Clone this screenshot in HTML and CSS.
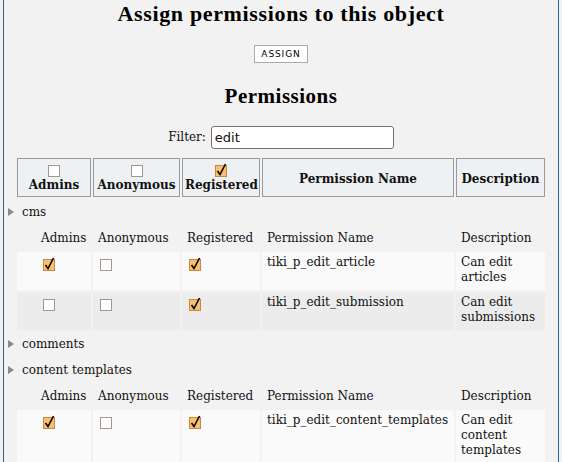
FILE: index.html
```html
<!DOCTYPE html>
<html>
<head>
<meta charset="utf-8">
<link rel="stylesheet" href="styles.css">
</head>
<body>
<div class="page">
  <h1 class="title">Assign permissions to this object</h1>
  <div class="assign-wrap"><button class="btn" type="button">ASSIGN</button></div>
  <h2 class="subtitle">Permissions</h2>
  <div class="filter"><label class="filter-label" for="flt">Filter:</label><input id="flt" class="filter-input" type="text" value="edit"></div>

  <table class="perm head">
    <colgroup><col class="c1"><col class="c2"><col class="c3"><col class="c4"><col class="c5"></colgroup>
    <tr>
      <th><svg class="cb" viewBox="0 0 12 12"><rect x="0.5" y="0.5" width="11" height="11" fill="#fff" stroke="#a3978b"/></svg>Admins</th>
      <th><svg class="cb" viewBox="0 0 12 12"><rect x="0.5" y="0.5" width="11" height="11" fill="#fff" stroke="#a3978b"/></svg>Anonymous</th>
      <th><svg class="cb" viewBox="0 0 12 12"><rect x="0.5" y="0.5" width="11" height="11" fill="#f8c06a" stroke="#c8884a"/><path d="M2.5 6 L5 9.5 L10.5 -1" fill="none" stroke="#000" stroke-width="1.6"/></svg>Registered</th>
      <th>Permission Name</th>
      <th>Description</th>
    </tr>
  </table>

  <div class="node"><span class="tri"></span>cms</div>
  <table class="perm list">
    <colgroup><col class="c1"><col class="c2"><col class="c3"><col class="c4"><col class="c5"></colgroup>
    <tr class="colhead"><td>Admins</td><td>Anonymous</td><td>Registered</td><td>Permission Name</td><td>Description</td></tr>
    <tr class="row odd">
      <td><svg class="cb" viewBox="0 0 12 12"><rect x="0.5" y="0.5" width="11" height="11" fill="#f8c06a" stroke="#c8884a"/><path d="M2.5 6 L5 9.5 L10.5 -1" fill="none" stroke="#000" stroke-width="1.6"/></svg></td>
      <td><svg class="cb" viewBox="0 0 12 12"><rect x="0.5" y="0.5" width="11" height="11" fill="#fff" stroke="#a3978b"/></svg></td>
      <td><svg class="cb" viewBox="0 0 12 12"><rect x="0.5" y="0.5" width="11" height="11" fill="#f8c06a" stroke="#c8884a"/><path d="M2.5 6 L5 9.5 L10.5 -1" fill="none" stroke="#000" stroke-width="1.6"/></svg></td>
      <td>tiki_p_edit_article</td>
      <td>Can edit articles</td>
    </tr>
    <tr class="row even">
      <td><svg class="cb" viewBox="0 0 12 12"><rect x="0.5" y="0.5" width="11" height="11" fill="#fff" stroke="#a3978b"/></svg></td>
      <td><svg class="cb" viewBox="0 0 12 12"><rect x="0.5" y="0.5" width="11" height="11" fill="#fff" stroke="#a3978b"/></svg></td>
      <td><svg class="cb" viewBox="0 0 12 12"><rect x="0.5" y="0.5" width="11" height="11" fill="#f8c06a" stroke="#c8884a"/><path d="M2.5 6 L5 9.5 L10.5 -1" fill="none" stroke="#000" stroke-width="1.6"/></svg></td>
      <td>tiki_p_edit_submission</td>
      <td>Can edit submissions</td>
    </tr>
  </table>

  <div class="node"><span class="tri"></span>comments</div>
  <div class="node"><span class="tri"></span>content templates</div>
  <table class="perm list">
    <colgroup><col class="c1"><col class="c2"><col class="c3"><col class="c4"><col class="c5"></colgroup>
    <tr class="colhead"><td>Admins</td><td>Anonymous</td><td>Registered</td><td>Permission Name</td><td>Description</td></tr>
    <tr class="row odd">
      <td><svg class="cb" viewBox="0 0 12 12"><rect x="0.5" y="0.5" width="11" height="11" fill="#f8c06a" stroke="#c8884a"/><path d="M2.5 6 L5 9.5 L10.5 -1" fill="none" stroke="#000" stroke-width="1.6"/></svg></td>
      <td><svg class="cb" viewBox="0 0 12 12"><rect x="0.5" y="0.5" width="11" height="11" fill="#fff" stroke="#a3978b"/></svg></td>
      <td><svg class="cb" viewBox="0 0 12 12"><rect x="0.5" y="0.5" width="11" height="11" fill="#f8c06a" stroke="#c8884a"/><path d="M2.5 6 L5 9.5 L10.5 -1" fill="none" stroke="#000" stroke-width="1.6"/></svg></td>
      <td>tiki_p_edit_content_templates</td>
      <td>Can edit content templates</td>
    </tr>
  </table>
</div>
</body>
</html>
```

FILE: styles.css
```css
html, body {
  margin: 0;
  padding: 0;
  background: #f2f2f2;
}
body {
  font-family: "DejaVu Serif", serif;
  font-size: 12px;
  color: #111;
}
.page {
  margin: 0 3px;
  border-left: 1px solid #2a6699;
  border-right: 1px solid #2a6699;
  min-height: 462px;
  box-sizing: border-box;
  overflow: hidden;
}
.title {
  margin: 0;
  padding-top: 1px;
  font-family: "Liberation Serif", serif;
  font-size: 22px;
  line-height: 26px;
  letter-spacing: 0.65px;
  font-weight: bold;
  text-align: center;
  color: #000;
}
.assign-wrap {
  margin-top: 18px;
  display: flex;
  justify-content: center;
}
.btn {
  width: 54px;
  height: 18px;
  box-sizing: border-box;
  padding: 0;
  margin: 0;
  background: #fff;
  border: 1px solid #aaa;
  border-radius: 0;
  font-family: "DejaVu Sans", sans-serif;
  font-size: 9px;
  letter-spacing: 0.9px;
  color: #000;
}
.subtitle {
  margin: 21px 0 0;
  font-family: "Liberation Serif", serif;
  font-size: 21px;
  line-height: 24px;
  letter-spacing: 0.5px;
  font-weight: bold;
  text-align: center;
  color: #000;
}
.filter {
  margin-top: 18px;
  display: flex;
  justify-content: center;
  align-items: center;
  gap: 5px;
}
.filter-label {
  line-height: 15px;
}
.filter-input {
  width: 183px;
  height: 23px;
  box-sizing: border-box;
  margin: 0;
  padding: 1px 3px;
  border: 1px solid #7a7067;
  border-radius: 3px;
  background: #fff;
  font-family: "DejaVu Sans", sans-serif;
  font-size: 13px;
  color: #111;
  outline: none;
}
.perm {
  table-layout: fixed;
  width: 532px;
  border-collapse: separate;
  border-spacing: 2px;
  margin-left: 11px;
}
.c1 { width: 74px; }
.c2 { width: 87px; }
.c3 { width: 78px; }
.c4 { width: 192px; }
.c5 { width: 89px; }
.head {
  margin-top: 7px;
}
.head th {
  border: 1px solid #9a9a9a;
  background: #eef1f3;
  padding: 6px 2px 3px;
  line-height: 16px;
  font-weight: bold;
  text-align: center;
  vertical-align: middle;
  color: #111;
}
.head .cb {
  display: block;
  margin: 0 auto;
}
.cb {
  width: 12px;
  height: 12px;
  overflow: visible;
}
.node {
  height: 26px;
  line-height: 26px;
  display: flex;
  align-items: center;
  padding-left: 4px;
  color: #111;
}
.tri {
  width: 0;
  height: 0;
  border-left: 6px solid #8a8a8a;
  border-top: 4px solid transparent;
  border-bottom: 4px solid transparent;
  margin-right: 8px;
}
.list {
  margin-bottom: -1px;
}
.list td {
  padding: 3px 4px 5px 5px;
  line-height: 15px;
  vertical-align: top;
  text-align: left;
}
.list td:first-child {
  padding-left: 24px;
}
.list .colhead td {
  padding-top: 4px;
  padding-bottom: 4px;
  vertical-align: middle;
}
.row.odd td { background: #fafafa; }
.row.even td { background: #ececec; }
.row .cb {
  display: block;
  margin: 4px 0 0 2px;
}
```
